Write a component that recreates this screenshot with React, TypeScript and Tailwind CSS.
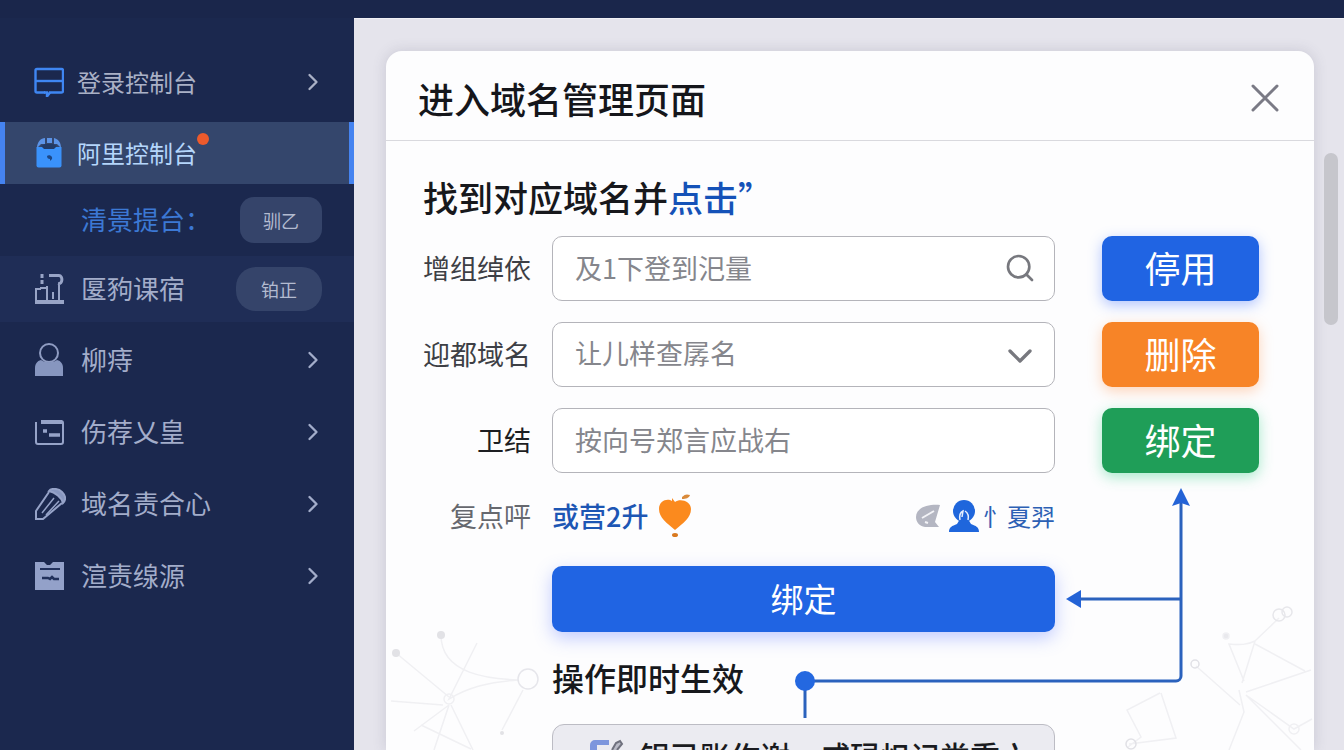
import type { ReactNode } from 'react';
import { ChevronRight, ChevronDown, Search } from 'lucide-react';

function ConsoleIcon() {
  return (
    <svg viewBox="0 0 30 30" className="w-[30px] h-[30px]" fill="none" stroke="#3f86f2" strokeWidth="2.4">
      <path d="M11 25.500H3a1.500 1.500 0 0 1-1.500-1.500V3.500A1.500 1.500 0 0 1 3 2h24.500A1.500 1.500 0 0 1 29 3.500V24a1.500 1.500 0 0 1-1.500 1.500H15" />
      <path d="M1.500 14h27.500" />
      <path d="M10 25.500h3v4l3-4" />
    </svg>
  );
}

function LockIcon() {
  return (
    <svg viewBox="0 0 30 30" className="w-[30px] h-[30px]">
      <path d="M2.500 9h25v18.500a2 2 0 0 1-2 2h-21a2 2 0 0 1-2-2z" fill="#3a92fb" />
      <path d="M3 10C3 4 7 0 11 0v6H7zM13 0h5v5h-5zM20 0c4 1 7 4 7 10l-4-4h-3z" fill="#5c93e6" />
      <path d="M7 8l4-2h8l4 2l-3 3H10z" fill="#223a66" />
      <path d="M13 18c2-2 6 0 5 3l-2 2v-2c-2 0-3-1-3-3z" fill="#1d4684" />
    </svg>
  );
}

function DeskIcon() {
  return (
    <svg viewBox="0 0 30 30" className="w-[30px] h-[30px]" fill="none" stroke="#98a4c6" strokeWidth="2">
      <path d="M7 15H2v11" />
      <path d="M1 28h30" strokeWidth="4" />
      <path d="M8 0v4M8 6v4" strokeWidth="3" />
      <path d="M15 1.500h10c4 0 4 9-1 8" strokeWidth="3" />
      <path d="M13 12v14M25 11v15M19 18v7" />
      <path d="M6 14h7" />
    </svg>
  );
}

function UserIcon() {
  return (
    <svg viewBox="0 0 30 34" className="w-[30px] h-[34px]">
      <circle cx="15" cy="10" r="9" fill="none" stroke="#8f9cc2" strokeWidth="2" />
      <path d="M1 33v-8c0-4 2-7 6-8c4 3 12 3 16 0c4 1 6 4 6 8v8z" fill="#8796bf" />
    </svg>
  );
}

function CardIcon() {
  return (
    <svg viewBox="0 0 30 28" className="w-[30px] h-[28px]" fill="none" stroke="#96a3c8" strokeWidth="2">
      <path d="M2 4v20a2 2 0 0 0 2 2h23a2 2 0 0 0 2-2V5a2 2 0 0 0-2-2H8" />
      <path d="M7 4h21" strokeWidth="4" />
      <path d="M9 13h4M15 17h11" strokeWidth="3.500" />
    </svg>
  );
}

function PencilIcon() {
  return (
    <svg viewBox="0 0 32 32" className="w-8 h-8" fill="none" stroke="#96a3c8" strokeWidth="2">
      <path d="M15 3C17 0 24 0 28 4c4 4 4 8 1 11c-1-5-8-11-14-12z" fill="#8897c0" />
      <path d="M15 4L2 23v8h7L28 15" />
      <path d="M8 25l12-15M12 27l13-14" strokeWidth="1.500" />
    </svg>
  );
}

function FileIcon() {
  return (
    <svg viewBox="0 0 30 30" className="w-[30px] h-[30px]">
      <path d="M1 1h9l3 3h3l3-3h11v28H1z" fill="#93a1c9" />
      <path d="M6 8h20" stroke="#22315c" strokeWidth="2" />
      <path d="M8 17h6l2 1l2-2l2 2h5" stroke="#22315c" strokeWidth="2.500" fill="none" />
    </svg>
  );
}

function HeartIcon() {
  return (
    <svg viewBox="0 0 34 44" className="w-[34px] h-[44px]">
      <path
        d="M17 36C9 29 1 24 1 15C1 6 10 4 14 7V4l3 4c5-4 16-1 16 7c0 9-8 14-16 21z"
        fill="#fb8a1e"
      />
      <path d="M24 3c3-3 5-3 8-2c-1 3-4 4-8 4z" fill="#d98a3a" />
      <ellipse cx="17" cy="41" rx="3" ry="2" fill="#d9791f" />
    </svg>
  );
}

function LeafIcon() {
  return (
    <svg viewBox="0 0 26 24" className="w-[26px] h-6">
      <path d="M25 1C14 0 1 3 1 13c0 5 3 9 9 10h14l-4-5z" fill="#b4b6c2" />
      <path d="M7 14L19 7M10 18l3 1" stroke="#f3f3f7" strokeWidth="2" />
    </svg>
  );
}

function PersonIcon() {
  return (
    <svg viewBox="0 0 30 32" className="w-[30px] h-8">
      <circle cx="15" cy="11" r="11" fill="#1f66dc" />
      <path d="M0 32c0-5 3-6 8-8l3-5h8l3 5c5 2 8 3 8 8z" fill="#1f66dc" />
      <path d="M11 20c-1-5 1-8 3-9l-1 6M16 11c3 2 4 5 3 9" stroke="#e5eefc" strokeWidth="1.500" fill="none" />
    </svg>
  );
}

function MenuRow({ icon, text }: { icon: ReactNode; text: string }) {
  return (
    <a href="#" className="flex items-center h-[72px] pl-[34px] pr-[27px] text-[#a3adca]">
      <span className="w-[30px] shrink-0">{icon}</span>
      <span className="ml-[17px] pb-1 text-[26px] flex-1">{text}</span>
      <ChevronRight className="w-7 h-7" strokeWidth={2} />
    </a>
  );
}

function Sidebar() {
  return (
    <nav className="w-[354px] shrink-0 bg-[#1b284e] pt-7">
      <a href="#" className="flex items-center h-[72px] mb-1 pl-[34px] pr-[27px] text-[#aab1c6]">
        <ConsoleIcon />
        <span className="ml-[13px] text-2xl flex-1">登录控制台</span>
        <ChevronRight className="w-7 h-7" strokeWidth={2} />
      </a>

      {/* Active item */}
      <a
        href="#"
        className="flex items-center h-[62px] pl-[29px] bg-[#34466c] border-x-5 border-[#4583f0] text-[#b5d6fb]"
      >
        <LockIcon />
        <span className="relative ml-[13px] text-2xl">
          阿里控制台
          <span className="absolute -top-1 -right-3 w-3 h-3 rounded-full bg-[#ec5a2c]" />
        </span>
      </a>

      <div className="flex items-center justify-between h-[72px] pl-[81px] pr-8">
        <a href="#" className="pb-1 text-[26px] text-[#3c78d4]">清景提台：</a>
        <button className="w-[82px] h-[46px] rounded-[14px] bg-[#35446a] text-lg text-[#b3bbd0]">驯乙</button>
      </div>

      <div className="flex items-center h-[66px] pl-[34px] pr-8 bg-[#1f2d56] text-[#a3adca]">
        <DeskIcon />
        <a href="#" className="ml-[17px] pb-1 text-[26px] flex-1">匽豞课宿</a>
        <button className="w-[86px] h-[44px] rounded-[20px] bg-[#35446a] text-lg text-[#b3bbd0]">铂正</button>
      </div>

      <div className="pt-0.5">
        <MenuRow icon={<UserIcon />} text="柳痔" />
        <MenuRow icon={<CardIcon />} text="伤荐乂皇" />
        <MenuRow icon={<PencilIcon />} text="域名责合心" />
        <MenuRow icon={<FileIcon />} text="渲责缐源" />
      </div>
    </nav>
  );
}

/* Arrows from the result dot to the two bind buttons */
function Connector() {
  return (
    <svg
      viewBox="0 0 405 235"
      className="absolute top-[344px] right-[119px] w-[405px] h-[235px] pointer-events-none"
      fill="none"
      stroke="#2b62bd"
      strokeWidth="3"
    >
      <path d="M391 16V191a5 5 0 0 1-5 5H15" />
      <path d="M391 114H286" />
      <path d="M15 196v37" />
      <circle cx="15" cy="196" r="10" fill="#2468e0" stroke="none" />
      <path d="M391 3l9 18l-9-3l-9 3z" fill="#2463d6" stroke="none" />
      <path d="M276 114l15-9v18z" fill="#2463d6" stroke="none" />
    </svg>
  );
}

function NetworkLeft() {
  return (
    <svg
      viewBox="0 0 160 125"
      className="absolute top-[484px] left-0 w-[160px] h-[125px]"
      fill="none"
      stroke="#f0f0f3"
      strokeWidth="1.500"
    >
      <path d="M10 28L63 72M55 10c0 40 50 44 77 45M91 18L63 74c20-12 40-17 69-19M137 65l-21 40M63 80L28 106M63 80L48 125M65 80l22 45M5 76l52 4M35 100l50 24" />
      <circle cx="63" cy="74" r="5" />
      <circle cx="142" cy="54" r="10" fill="#fdfdfe" stroke="#e6e6eb" />
      <g fill="#e2e2e6" stroke="none">
        <circle cx="10" cy="28" r="4" />
        <circle cx="55" cy="10" r="4" />
        <circle cx="116" cy="108" r="2" />
      </g>
    </svg>
  );
}

function NetworkRight() {
  return (
    <svg
      viewBox="0 0 190 150"
      className="absolute top-[459px] right-0 w-[190px] h-[150px]"
      fill="none"
      stroke="#f0f0f3"
      strokeWidth="1.500"
    >
      <path d="M155 18L131 41c-8 4-15 4-26 3l15 37M131 41l-13 42M131 44l50 27M72 66l44 39M122 92l65-22M122 95l55 55M115 90l5 22l-15 38M122 95l48 34l18-10M36 93l-33 17l14 27l-13 10M37 93l15 45l-47 6" />
      <circle cx="155" cy="15" r="6" stroke="#e7e7eb" />
      <circle cx="163" cy="12" r="5" stroke="#e7e7eb" />
      <circle cx="71" cy="64" r="4" stroke="#e1e1e6" />
      <circle cx="102" cy="36" r="3" fill="#e9e9ed" />
      <circle cx="170" cy="129" r="5" />
      <circle cx="7" cy="144" r="5" stroke="#e1e1e6" />
    </svg>
  );
}

export default function App() {
  return (
    <div className="flex flex-col h-screen overflow-hidden bg-[#1a264b] font-['Noto_Sans_CJK_SC',sans-serif]">
      <header className="h-[18px] shrink-0" />
      <div className="flex flex-1 min-h-0">
        <Sidebar />

        <main className="flex flex-1 min-w-0 pl-8 pt-8 bg-[#e5e4ec] border-t border-[#f0f0f5]">
          <section className="flex flex-col flex-1 min-w-0 rounded-t-2xl bg-[#fdfdfe] shadow-[0_0_14px_rgba(70,70,100,0.18)]">
            <div className="flex items-center justify-between h-[90px] shrink-0 pl-8 pr-[33px] pt-1 border-b border-[#d9d9de]">
              <h1 className="text-4xl font-medium text-[#15161b]">进入域名管理页面</h1>
              <button aria-label="关闭">
                <svg viewBox="0 0 32 32" className="w-8 h-8" stroke="#7a7a85" strokeWidth="3" strokeLinecap="round">
                  <path d="M4 4l24 24M28 4L4 28" />
                </svg>
              </button>
            </div>

            <div className="relative flex-1 min-h-0 overflow-hidden pl-[37px] pr-[55px] pt-8">
              <NetworkLeft />
              <NetworkRight />

              <h2 className="relative mb-[15px] text-[35px] leading-[48px] font-medium text-[#17181c]">
                找到对应域名并<span className="text-[#1552b8]">点击”</span>
              </h2>

              <form className="relative grid grid-cols-[108px_1fr_183px] gap-[21px] items-center text-[27px]">
                <label htmlFor="group" className="text-right whitespace-nowrap text-[#3d3f45]">增组绰依</label>
                <div className="relative">
                  <input
                    id="group"
                    placeholder="及1下登到汜量"
                    className="block w-full h-[65px] px-[22px] pb-0.5 rounded-[10px] border border-[#b4b4ba] bg-white placeholder:text-[#85868c]"
                  />
                  <Search className="absolute right-[19px] top-4 w-8 h-8 text-[#77787e]" strokeWidth={2} />
                </div>
                <button
                  type="button"
                  className="ml-[26px] h-[65px] pb-1 rounded-[10px] bg-[#2064e3] text-4xl text-white shadow-[0_4px_14px_rgba(60,110,255,0.4)]"
                >
                  停用
                </button>

                <label htmlFor="domain" className="text-right whitespace-nowrap text-[#3d3f45]">迎都域名</label>
                <div className="relative">
                  <select
                    id="domain"
                    className="block w-full h-[65px] px-[22px] pb-0.5 rounded-[10px] border border-[#b4b4ba] bg-white text-[#85868c] appearance-none"
                  >
                    <option>让儿样查孱名</option>
                  </select>
                  <ChevronDown className="absolute right-[15px] top-[14px] w-10 h-10 text-[#77787e] pointer-events-none" strokeWidth={2} />
                </div>
                <button
                  type="button"
                  className="ml-[26px] h-[65px] pb-1 rounded-[10px] bg-[#f78427] text-4xl text-white shadow-[0_4px_14px_rgba(255,150,80,0.4)]"
                >
                  删除
                </button>

                <label htmlFor="record" className="text-right whitespace-nowrap text-[#1d1e22]">卫结</label>
                <input
                  id="record"
                  placeholder="按向号郑言应战右"
                  className="block w-full h-[65px] px-[22px] pb-0.5 rounded-[10px] border border-[#b4b4ba] bg-white placeholder:text-[#85868c]"
                />
                <button
                  type="button"
                  className="ml-[26px] h-[65px] pb-1 rounded-[10px] bg-[#1f9e58] text-4xl text-white shadow-[0_4px_14px_rgba(60,210,140,0.45)]"
                >
                  绑定
                </button>

                <span className="text-right text-[#66686e]">复点呯</span>
                <div className="flex items-center justify-between h-11">
                  <a href="#" className="flex items-center gap-2.5 font-medium text-[#1d56b4]">
                    或营2升
                    <HeartIcon />
                  </a>
                  <a href="#" className="flex items-center gap-1 text-2xl text-[#2c60b4]">
                    <LeafIcon />
                    <span className="ml-1"><PersonIcon /></span>
                    忄夏羿
                  </a>
                </div>

                <button
                  type="button"
                  className="col-start-2 mt-[7px] h-[66px] rounded-[10px] bg-[#2064e3] text-[33px] text-white shadow-[0_6px_18px_rgba(80,110,255,0.35)]"
                >
                  绑定
                </button>

                <h3 className="col-start-2 mb-0.5 text-[32px] leading-[48px] font-medium text-[#17181c]">操作即时生效</h3>

                <div className="col-start-2 flex items-center h-[62px] pl-[35px] rounded-xl border border-[#bcbcc4] bg-[#ebebf1] text-[30px] font-medium text-[#1a1b20] whitespace-nowrap">
                  <svg viewBox="0 0 36 34" className="w-9 h-[34px] mr-4">
                    <path d="M2 32V7a5 5 0 0 1 5-5h14v5H9v25z" fill="#7d96dd" />
                    <path d="M24 12l4-7l4-2l2 3l-5 6" fill="#b9bac6" stroke="#6f717e" strokeWidth="2" />
                  </svg>
                  银已账作谢、咸碌炽记类重六
                </div>
              </form>

              <Connector />
            </div>
          </section>

          {/* Scroll thumb */}
          <div className="w-[30px] shrink-0 pt-[102px] pl-2.5">
            <div className="w-[14px] h-[172px] rounded-full bg-[#c6c6cc]" />
          </div>
        </main>
      </div>
    </div>
  );
}
